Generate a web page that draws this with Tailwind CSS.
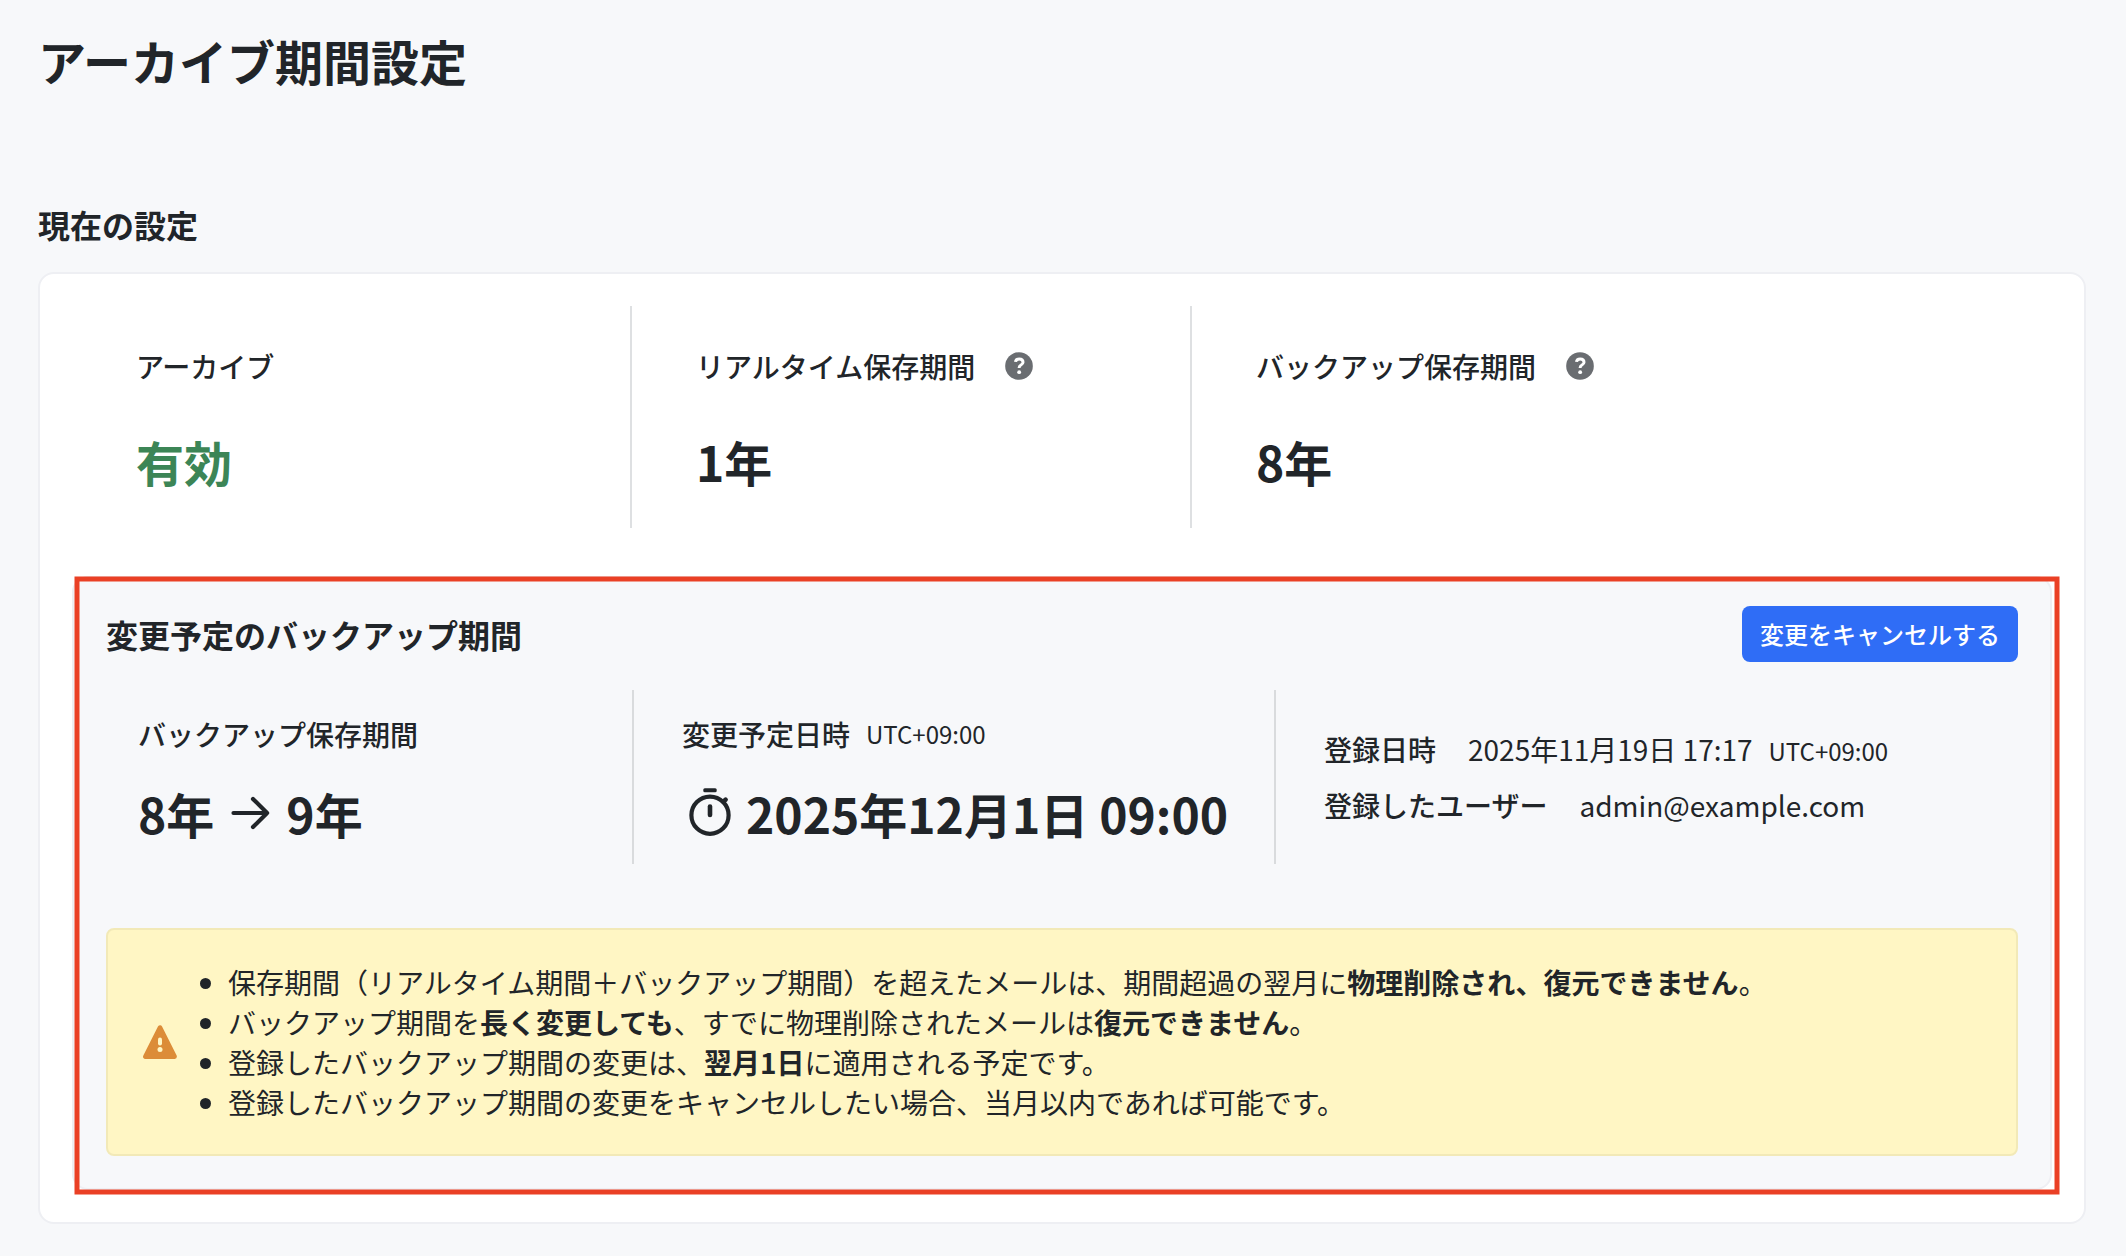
<!DOCTYPE html>
<html lang="ja">
<head>
  <meta charset="UTF-8">
  <meta name="viewport" content="width=device-width, initial-scale=1.0">
  <title>アーカイブ期間設定</title>
  <script src="https://cdn.jsdelivr.net/npm/@tailwindcss/browser@4"></script>
  <style>
    body {
      font-family: 'Noto Sans CJK JP', sans-serif;
    }
  </style>
</head>
<body class="bg-[#f7f8fa] text-[#212529] h-[1256px] overflow-hidden">

  <main class="pl-[38px] pr-10 pt-6">
    <h1 class="text-5xl leading-[72px] font-bold">アーカイブ期間設定</h1>

    <h2 class="mt-[104px] text-[32px] leading-12 font-bold">現在の設定</h2>

    <section class="mt-6 h-[952px] bg-white border-2 border-[#eeeff3] rounded-2xl px-8 pt-8">

      <!-- Current settings -->
      <div class="flex h-[222px]">
        <div class="w-[560px] border-r-2 border-[#dee0e2] pl-16 pt-[39px]">
          <div class="text-[28px] leading-[42px] font-medium">アーカイブ</div>
          <div class="mt-[38px] text-5xl leading-[72px] font-bold text-[#3c8556]">有効</div>
        </div>
        <div class="w-[560px] border-r-2 border-[#dee0e2] pl-16 pt-[39px]">
          <div class="flex items-center text-[28px] leading-[42px] font-medium">
            リアルタイム保存期間
            <svg class="ml-[30px] size-7" viewBox="0 0 16 16">
              <circle cx="8" cy="8" r="7.9" fill="#6a6d71"/>
              <path d="M6 5.7c.1-1.1.9-1.75 2.1-1.75 1.3 0 2.2.7 2.2 1.85 0 1.6-2.2 1.5-2.2 3.1v.2" fill="none" stroke="#fff" stroke-width="1.7"/>
              <circle cx="8.1" cy="11.5" r="1.1" fill="#fff"/>
            </svg>
          </div>
          <div class="mt-[38px] text-5xl leading-[72px] font-bold">1年</div>
        </div>
        <div class="pl-16 pt-[39px]">
          <div class="flex items-center text-[28px] leading-[42px] font-medium">
            バックアップ保存期間
            <svg class="ml-[30px] size-7" viewBox="0 0 16 16">
              <circle cx="8" cy="8" r="7.9" fill="#6a6d71"/>
              <path d="M6 5.7c.1-1.1.9-1.75 2.1-1.75 1.3 0 2.2.7 2.2 1.85 0 1.6-2.2 1.5-2.2 3.1v.2" fill="none" stroke="#fff" stroke-width="1.7"/>
              <circle cx="8.1" cy="11.5" r="1.1" fill="#fff"/>
            </svg>
          </div>
          <div class="mt-[38px] text-5xl leading-[72px] font-bold">8年</div>
        </div>
      </div>

      <!-- Scheduled change -->
      <div class="relative mt-12 h-[614px] bg-[#f7f8fa] border-2 border-[#eeeff3] rounded-2xl px-8 pt-7">
        <!-- Highlight frame -->
        <svg class="absolute left-0 -top-[2px] w-[1986px] h-[619px] max-w-none pointer-events-none" viewBox="0 0 1986 619" fill="none">
          <rect x="3" y="3" width="1980" height="613" stroke="#ea4025" stroke-width="5"/>
        </svg>

        <div class="flex justify-between items-center">
          <h3 class="text-[32px] leading-12 font-bold">変更予定のバックアップ期間</h3>
          <button class="w-[276px] h-14 rounded-lg bg-[#2f6df6] text-white text-2xl font-medium">変更をキャンセルする</button>
        </div>

        <div class="flex mt-7 h-[174px]">
          <div class="w-[528px] border-r-2 border-[#d9dbdd] pl-8 pt-[23px]">
            <div class="text-[28px] leading-[42px] font-medium">バックアップ保存期間</div>
            <div class="mt-[22px] flex items-center text-5xl leading-[72px] font-bold">
              8年
              <svg class="mx-3 size-12" viewBox="0 0 16 16" fill="none" stroke="currentColor" stroke-width="1.4" stroke-linecap="round" stroke-linejoin="round"><path d="M2.5 8h11.2M9 3.3 13.7 8 9 12.700"/></svg>
              9年
            </div>
          </div>
          <div class="w-[642px] border-r-2 border-[#d9dbdd] pl-12 pt-[23px]">
            <div class="flex items-center text-[28px] leading-[42px] font-medium">変更予定日時<span class="ml-4 text-2xl leading-[42px] font-normal">UTC+09:00</span></div>
            <div class="mt-[22px] flex items-center text-5xl leading-[72px] font-bold">
              <svg class="ml-1 mr-3 -mt-[2px] size-12" viewBox="0 0 48 48" fill="none" stroke="currentColor" stroke-linecap="round">
                <circle cx="24" cy="27.2" r="18.6" stroke-width="4.2"/>
                <rect x="17.3" y=".3" width="13.4" height="4" rx="1.5" fill="currentColor" stroke="none"/>
                <path d="M24 18.5v8.5" stroke-width="4.6"/>
                <path d="m37.3 13.9 2.3-2.3" stroke-width="4.6"/>
              </svg>
              2025年12月1日 09:00
            </div>
          </div>
          <div class="pl-12 pt-[38px] text-[28px] leading-[42px]">
            <div><span class="font-medium mr-8">登録日時</span>2025年11月19日 17:17<span class="ml-4 text-2xl">UTC+09:00</span></div>
            <div class="mt-[14px]"><span class="font-medium mr-8">登録したユーザー</span>admin@example.com</div>
          </div>
        </div>

        <!-- Notice -->
        <div class="mt-16 flex items-center h-[228px] bg-[#fff6c4] border-2 border-[#f2e9b7] rounded-lg pl-[35px]">
          <svg class="w-[34px] h-[34px]" viewBox="0 0 34 34">
            <path d="M17 2.6 2.4 31.6h29.2z" fill="#dc8c38" stroke="#dc8c38" stroke-width="4.6" stroke-linejoin="round"/>
            <path d="M17 14.5v4" stroke="#fff6c4" stroke-width="4" stroke-linecap="round"/>
            <circle cx="17" cy="24.6" r="2.5" fill="#fff6c4"/>
          </svg>
          <ul class="list-disc pl-[51px] text-[28px] leading-10">
            <li>保存期間（リアルタイム期間＋バックアップ期間）を超えたメールは、期間超過の翌月に<b>物理削除され、復元できません</b>。</li>
            <li>バックアップ期間を<b>長く変更しても</b>、すでに物理削除されたメールは<b>復元できません</b>。</li>
            <li>登録したバックアップ期間の変更は、<b>翌月1日</b>に適用される予定です。</li>
            <li>登録したバックアップ期間の変更をキャンセルしたい場合、当月以内であれば可能です。</li>
          </ul>
        </div>
      </div>
    </section>
  </main>

</body>
</html>
